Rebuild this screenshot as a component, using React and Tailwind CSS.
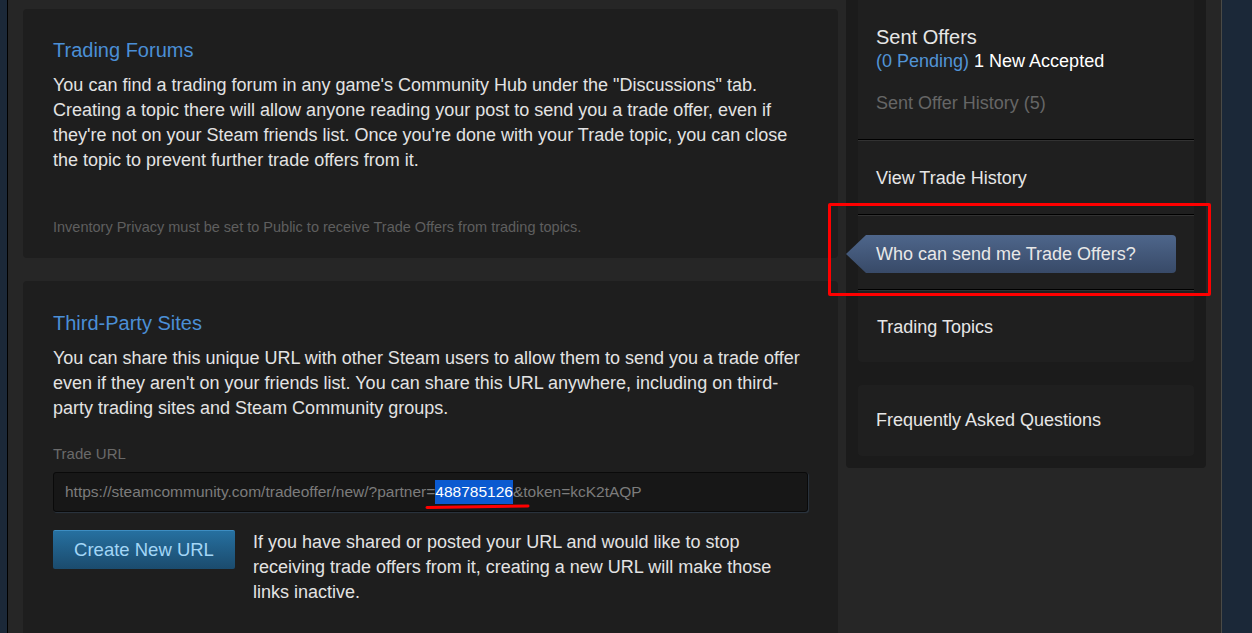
export default function App() {
  return (
    <div className="relative flex h-[633px] w-[1252px] overflow-hidden bg-[#262626] font-['Liberation_Sans',Arial,sans-serif]">
      <div className="w-[8px] shrink-0 border-r border-black bg-[#1b2838]" />

      <div className="flex gap-[8px] px-[15px]">
        {/* left column */}
        <div className="flex w-[815px] flex-col gap-[23px] pt-[9px]">
          <section className="h-[249px] shrink-0 rounded-[4px] bg-[#1e1e1e] px-[30px] pt-[29px]">
            <h2 className="text-[20px] leading-[24px] text-[#4b8fd6]">Trading Forums</h2>
            <p className="mt-[11px] text-[18px] leading-[25px] text-[#e3e3e3]">
              You can find a trading forum in any game's Community Hub under the "Discussions" tab.<br />
              Creating a topic there will allow anyone reading your post to send you a trade offer, even if<br />
              they're not on your Steam friends list. Once you're done with your Trade topic, you can close<br />
              the topic to prevent further trade offers from it.
            </p>
            <p className="mt-[45px] text-[14.5px] leading-[18px] text-[#5f5f5f]">
              Inventory Privacy must be set to Public to receive Trade Offers from trading topics.
            </p>
          </section>

          <section className="h-[400px] shrink-0 rounded-[4px] bg-[#1e1e1e] px-[30px] pt-[30px]">
            <h2 className="text-[20px] leading-[24px] text-[#4b8fd6]">Third-Party Sites</h2>
            <p className="mt-[11px] text-[18px] leading-[25px] text-[#e3e3e3]">
              You can share this unique URL with other Steam users to allow them to send you a trade offer<br />
              even if they aren't on your friends list. You can share this URL anywhere, including on third-<br />
              party trading sites and Steam Community groups.
            </p>
            <div className="mt-[24px] text-[15px] leading-[18px] text-[#6a6a6a]">Trade URL</div>
            <div className="mt-[9px] flex h-[40px] items-center rounded-[3px] border border-[#0a0a0a] bg-[#171717] px-[11px] text-[15.5px] text-[#7c7c7c] shadow-[1px_1px_1px_#2b3540]">
              <span>https://steamcommunity.com/tradeoffer/new/?partner=</span>
              <span className="bg-[#0b5ad0] text-white">488785126</span>
              <span>&amp;token=kcK2tAQP</span>
            </div>
            <div className="mt-[18px] flex gap-[18px]">
              <button className="flex h-[39px] w-[182px] shrink-0 items-center justify-center rounded-[2px] border-t border-[#3d8dc2] bg-gradient-to-b from-[#2670a0] to-[#1b4b6d] text-[18.5px] text-[#a3d6f6]">
                Create New URL
              </button>
              <p className="text-[18px] leading-[25px] text-[#e3e3e3]">
                If you have shared or posted your URL and would like to stop<br />
                receiving trade offers from it, creating a new URL will make those<br />
                links inactive.
              </p>
            </div>
          </section>
        </div>

        {/* right column */}
        <div className="w-[360px] self-start rounded-b-[4px] bg-[#1b1b1b] px-[12px] pb-[12px]">
          <div className="rounded-b-[4px] bg-[#1f1f1f]">
            <div className="px-[18px] pb-[24px] pt-[25px]">
              <div className="text-[20px] leading-[24px] text-[#e6e6e6]">Sent Offers</div>
              <div className="text-[18px] leading-[24px]">
                <span className="text-[#5294d6]">(0 Pending)</span> <span className="text-white">1 New Accepted</span>
              </div>
              <div className="mt-[18px] text-[18px] leading-[24px] text-[#666666]">Sent Offer History (5)</div>
            </div>
            <div className="border-b border-t border-b-[#323232] border-t-black" />
            <div className="px-[18px] pb-[24px] pt-[25px] text-[18px] leading-[24px] text-[#e6e6e6]">View Trade History</div>
            <div className="border-b border-t border-b-[#323232] border-t-black" />
            <div className="pb-[16px] pt-[19px]">
              <div className="-ml-[12px] flex h-[38px] w-[330px]">
                <svg width="20" height="38" viewBox="0 0 20 38" className="shrink-0">
                  <defs>
                    <linearGradient id="tab" x1="0" y1="0" x2="0" y2="1">
                      <stop offset="0" stopColor="#4e668b" />
                      <stop offset="1" stopColor="#384a68" />
                    </linearGradient>
                  </defs>
                  <polygon points="20,0 0,19 20,38" fill="url(#tab)" />
                </svg>
                <div className="flex flex-1 items-center rounded-r-[4px] bg-gradient-to-b from-[#4e668b] to-[#384a68] pl-[10px] text-[18px] text-[#e8e8e8]">
                  Who can send me Trade Offers?
                </div>
              </div>
            </div>
            <div className="border-b border-t border-b-[#323232] border-t-black" />
            <div className="px-[19px] pb-[23px] pt-[24px] text-[18px] leading-[24px] text-[#e6e6e6]">Trading Topics</div>
          </div>
          <div className="mt-[23px] rounded-[4px] bg-[#1f1f1f] px-[18px] pb-[24px] pt-[23px] text-[18px] leading-[24px] text-[#e6e6e6]">
            Frequently Asked Questions
          </div>
        </div>
      </div>

      <div className="flex-1 border-l border-[#4a4a46] bg-[#1b2838]" />

      {/* annotations */}
      <div className="absolute left-[828px] top-[203px] h-[93px] w-[383px] rounded-[2px] border-[3px] border-[#ff0000]" />
      <svg className="absolute left-[425px] top-[502px]" width="106" height="10" viewBox="0 0 106 10">
        <path d="M2 5.5 Q 50 5 103 4" stroke="#ff0000" strokeWidth="3" fill="none" strokeLinecap="round" />
      </svg>
    </div>
  );
}
